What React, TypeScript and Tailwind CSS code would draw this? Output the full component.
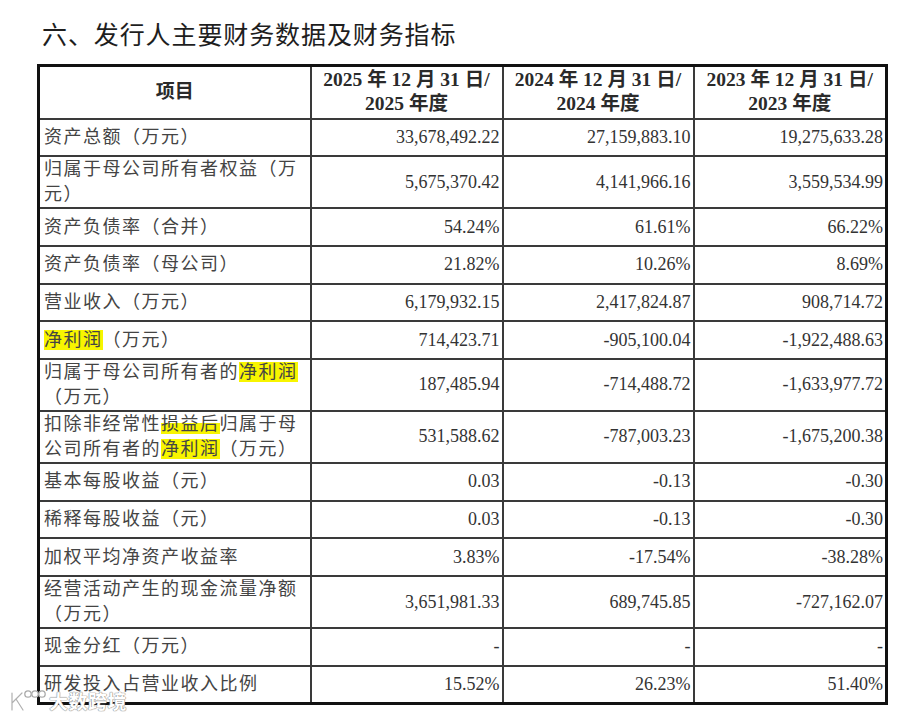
import React from "react";

type Row = {
  label: React.ReactNode;
  values: [string, string, string];
  tall?: boolean;
};

const Hl: React.FC<{ children: React.ReactNode }> = ({ children }) => (
  <span className="bg-[#f8f500]">{children}</span>
);

const rows: Row[] = [
  { label: "资产总额（万元）", values: ["33,678,492.22", "27,159,883.10", "19,275,633.28"] },
  { label: "归属于母公司所有者权益（万元）", values: ["5,675,370.42", "4,141,966.16", "3,559,534.99"], tall: true },
  { label: "资产负债率（合并）", values: ["54.24%", "61.61%", "66.22%"] },
  { label: "资产负债率（母公司）", values: ["21.82%", "10.26%", "8.69%"] },
  { label: "营业收入（万元）", values: ["6,179,932.15", "2,417,824.87", "908,714.72"] },
  {
    label: (
      <>
        <Hl>净利润</Hl>（万元）
      </>
    ),
    values: ["714,423.71", "-905,100.04", "-1,922,488.63"],
  },
  {
    label: (
      <>
        归属于母公司所有者的<Hl>净利润</Hl>（万元）
      </>
    ),
    values: ["187,485.94", "-714,488.72", "-1,633,977.72"],
    tall: true,
  },
  {
    label: (
      <>
        扣除非经常性
        <span className="bg-[linear-gradient(to_bottom,transparent_45%,#f8f500_45%)]">损益后</span>
        归属于母公司所有者的<Hl>净利润</Hl>（万元）
      </>
    ),
    values: ["531,588.62", "-787,003.23", "-1,675,200.38"],
    tall: true,
  },
  { label: "基本每股收益（元）", values: ["0.03", "-0.13", "-0.30"] },
  { label: "稀释每股收益（元）", values: ["0.03", "-0.13", "-0.30"] },
  { label: "加权平均净资产收益率", values: ["3.83%", "-17.54%", "-38.28%"] },
  { label: "经营活动产生的现金流量净额（万元）", values: ["3,651,981.33", "689,745.85", "-727,162.07"], tall: true },
  { label: "现金分红（万元）", values: ["-", "-", "-"] },
  { label: "研发投入占营业收入比例", values: ["15.52%", "26.23%", "51.40%"] },
];

const years = ["2025", "2024", "2023"];

export default function App() {
  return (
    <div
      className="relative w-[900px] h-[718px] bg-white overflow-hidden"
      style={{ fontFamily: '"Liberation Serif", "Noto Sans CJK SC", serif' }}
    >
      <h1
        className="pt-[16px] pl-[42px] text-[25px] leading-[34px] text-[#1e1e1e] tracking-[0.9px]"
        style={{ fontFamily: '"Noto Sans CJK SC", sans-serif' }}
      >
        六、发行人主要财务数据及财务指标
      </h1>
      <table className="mt-[14px] ml-[37px] w-[848px] table-fixed border-collapse border-[3px] border-[#111]">
        <colgroup>
          <col className="w-[272px]" />
          <col className="w-[192px]" />
          <col className="w-[191px]" />
          <col className="w-[193px]" />
        </colgroup>
        <thead>
          <tr className="h-[53px]">
            <th className="border-2 border-[#3a3a3a] text-[19px] font-bold text-[#2a2a2a] text-center align-middle">
              项目
            </th>
            {years.map((y) => (
              <th
                key={y}
                className="border-2 border-[#3a3a3a] text-[19.5px] leading-[24px] font-bold text-[#2a2a2a] text-center align-middle whitespace-nowrap"
              >
                {y} 年 12 月 31 日/
                <br />
                {y} 年度
              </th>
            ))}
          </tr>
        </thead>
        <tbody>
          {rows.map((r, i) => (
            <tr key={i} className={r.tall ? "h-[51.7px]" : "h-[37.7px]"}>
              <td className="border-2 border-[#3a3a3a] pl-[4px] pr-[2px] text-[18px] leading-[25px] tracking-[1.5px] text-[#444] align-middle">
                {r.label}
              </td>
              {r.values.map((v, j) => (
                <td
                  key={j}
                  className="border-2 border-[#3a3a3a] pr-[2px] text-[18px] text-right text-[#333] align-middle whitespace-nowrap"
                >
                  {v}
                </td>
              ))}
            </tr>
          ))}
        </tbody>
      </table>

      {/* watermark */}
      <div className="absolute left-[7px] top-[688px] flex items-center gap-[2px]">
        <svg width="40" height="26" viewBox="0 0 40 26" fill="none">
          <path d="M5 5 V22 M5 15 L15 5 M9 11 L16 22" stroke="#fff" strokeWidth="4.5" strokeLinecap="round" />
          <path d="M5 5 V22 M5 15 L15 5 M9 11 L16 22" stroke="#b0b0b0" strokeWidth="1.2" strokeLinecap="round" fill="none" />
          <circle cx="21" cy="6" r="3.2" stroke="#aaa" strokeWidth="1.3" fill="#fff" />
          <circle cx="28" cy="6" r="3.2" stroke="#aaa" strokeWidth="1.3" fill="#fff" />
          <circle cx="35" cy="6" r="3.2" stroke="#aaa" strokeWidth="1.3" fill="#fff" />
        </svg>
        <span
          className="text-[19px] leading-[24px] font-bold text-white tracking-[0.5px]"
          style={{
            fontFamily: '"Noto Sans CJK SC", sans-serif',
            textShadow: "0 0 1px #888, 0 0 1px #888, 0 0 1px #999",
          }}
        >
          大数跨境
        </span>
      </div>
    </div>
  );
}
